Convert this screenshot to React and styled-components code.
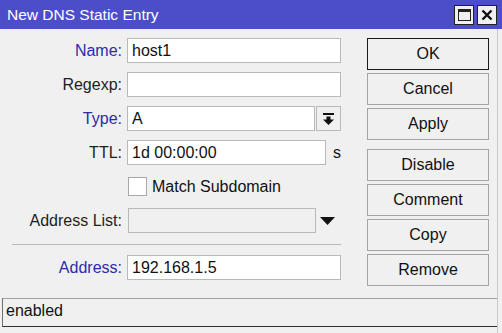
import styled, { createGlobalStyle } from "styled-components";

const Global = createGlobalStyle`
  html, body { margin: 0; padding: 0; background: #f0f0f0; }
  body { font-family: "Liberation Sans", Arial, sans-serif; }
`;

const Window = styled.div`
  width: 502px;
  height: 333px;
  display: flex;
  flex-direction: column;
  background: #f0f0f0;
  overflow: hidden;
`;

const TitleBar = styled.div`
  height: 29px;
  flex: none;
  background: #4b4dc9;
  display: flex;
  align-items: center;
  padding: 0 5px 0 7px;
  color: #fff;
  font-size: 15.5px;
`;

const Title = styled.div`
  flex: 1;
  margin-top: 1px;
`;

const TitleButtons = styled.div`
  display: flex;
  gap: 3px;
`;

const TitleButton = styled.div`
  width: 20px;
  height: 20px;
  box-sizing: border-box;
  border: 1px solid #222;
  background: #f0f0f0;
  display: flex;
  align-items: center;
  justify-content: center;
`;

const MaxIcon = styled.div`
  width: 13px;
  height: 12px;
  box-sizing: border-box;
  border: 1px solid #222;
  border-top-width: 3px;
`;

const Main = styled.div`
  flex: 1;
  display: flex;
  flex-direction: column;
  margin-right: 4px;
  border-right: 1px solid #c8c8c8;
`;

const Body = styled.div`
  flex: 1;
  display: flex;
  gap: 26px;
  padding-top: 9px;
`;

const Form = styled.div`
  width: 341px;
  display: flex;
  flex-direction: column;
  gap: 9px;
`;

const Row = styled.div`
  height: 25px;
  display: flex;
  align-items: center;
  gap: 5px;
`;

const Label = styled.div`
  width: 122px;
  flex: none;
  text-align: right;
  font-size: 16px;
  color: ${(p) => (p.$blue ? "#2b2bab" : "#1e1e1e")};
`;

const Field = styled.div`
  width: ${(p) => p.$w}px;
  height: 25px;
  box-sizing: border-box;
  border: 1px solid #b9b9b9;
  background: ${(p) => (p.$disabled ? "#f0f0f0" : "#fff")};
  padding-left: 4px;
  display: flex;
  align-items: center;
  font-size: 16px;
  color: #111;
  margin-left: ${(p) => p.$ml || 0}px;
`;

const DropButton = styled.div`
  width: 25px;
  height: 25px;
  box-sizing: border-box;
  border: 1px solid #b9b9b9;
  background: #f0f0f0;
  margin-left: -4px;
  display: flex;
  align-items: center;
  justify-content: center;
`;

const Unit = styled.span`
  font-size: 16px;
  color: #111;
  margin-left: 2px;
`;

const Check = styled.div`
  width: 19px;
  height: 19px;
  box-sizing: border-box;
  border: 1px solid #a8a8a8;
  background: #fff;
  margin-left: 128px;
`;

const CheckLabel = styled.span`
  font-size: 16px;
  color: #111;
`;

const Separator = styled.div`
  height: 1px;
  background: #b8b8b8;
  margin: 2px 0 1px 12px;
`;

const Buttons = styled.div`
  width: 122px;
  display: flex;
  flex-direction: column;
  gap: 3px;
`;

const Button = styled.div`
  height: 32px;
  box-sizing: border-box;
  border: 1px solid ${(p) => (p.$default ? "#1a1a1a" : "#a4a4a4")};
  background: #f0f0f0;
  display: flex;
  align-items: center;
  justify-content: center;
  font-size: 16px;
  color: #111;
  margin-top: ${(p) => (p.$spaced ? 6 : 0)}px;
`;

const StatusBar = styled.div`
  height: 29px;
  flex: none;
  box-sizing: border-box;
  border-top: 1px solid #a0a0a0;
  border-left: 1px solid #707070;
  border-bottom: 1px solid #303030;
  margin-left: 2px;
  padding: 3px 0 0 3px;
  font-size: 16px;
  color: #111;
`;

const Foot = styled.div`
  height: 6px;
  flex: none;
`;

const DropIcon = () => (
  <svg width="13" height="14" viewBox="0 0 13 14">
    <rect x="1" y="1" width="11" height="2" fill="#111" />
    <polygon points="4.5,4.5 8.5,4.5 8.5,7.5 12,7.5 6.5,13 1,7.5 4.5,7.5" fill="#111" />
  </svg>
);

const ArrowDown = () => (
  <svg width="15" height="8" viewBox="0 0 15 8" style={{ marginLeft: -1 }}>
    <polygon points="0,0 15,0 7.5,8" fill="#111" />
  </svg>
);

export default function App() {
  return (
    <Window>
      <Global />
      <TitleBar>
        <Title>New DNS Static Entry</Title>
        <TitleButtons>
          <TitleButton>
            <MaxIcon />
          </TitleButton>
          <TitleButton>
            <svg width="12" height="12" viewBox="0 0 12 12">
              <path d="M1.5 1.5 L10.5 10.5 M10.5 1.5 L1.5 10.5" stroke="#111" strokeWidth="2.4" />
            </svg>
          </TitleButton>
        </TitleButtons>
      </TitleBar>
      <Main>
        <Body>
          <Form>
            <Row>
              <Label $blue>Name:</Label>
              <Field $w={214}>host1</Field>
            </Row>
            <Row>
              <Label>Regexp:</Label>
              <Field $w={214} />
            </Row>
            <Row>
              <Label $blue>Type:</Label>
              <Field $w={190}>A</Field>
              <DropButton>
                <DropIcon />
              </DropButton>
            </Row>
            <Row>
              <Label>TTL:</Label>
              <Field $w={200}>1d 00:00:00</Field>
              <Unit>s</Unit>
            </Row>
            <Row>
              <Check />
              <CheckLabel>Match Subdomain</CheckLabel>
            </Row>
            <Row>
              <Label>Address List:</Label>
              <Field $w={188} $ml={1} $disabled />
              <ArrowDown />
            </Row>
            <Separator />
            <Row>
              <Label $blue>Address:</Label>
              <Field $w={214}>192.168.1.5</Field>
            </Row>
          </Form>
          <Buttons>
            <Button $default>OK</Button>
            <Button>Cancel</Button>
            <Button>Apply</Button>
            <Button $spaced>Disable</Button>
            <Button>Comment</Button>
            <Button>Copy</Button>
            <Button>Remove</Button>
          </Buttons>
        </Body>
        <StatusBar>enabled</StatusBar>
        <Foot />
      </Main>
    </Window>
  );
}
